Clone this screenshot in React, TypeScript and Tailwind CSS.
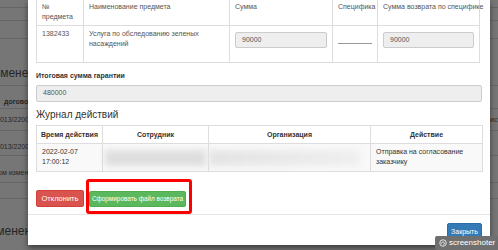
import React from 'react'

const cell = 'border border-[#dddddd] align-top px-[5px]'

const App: React.FC = () => {
  return (
    <div className="relative h-[250px] w-[498px] overflow-hidden bg-[#767676] font-['Liberation_Sans',Arial,sans-serif] text-[#262626]">
      {/* page behind the overlay */}
      <div className="flex flex-col">
        <div className="h-[8px] border-b border-[#666]" />
        <div className="h-[13px] border-b border-[#666]" />
        <div className="h-[18px] border-b border-[#666]" />
        <div className="flex h-[47px] items-end whitespace-nowrap border-b border-[#666] pb-[5px] text-[12px] leading-[14px]">
          <span className="-ml-[14px] w-[42px] overflow-hidden">Изменения</span>
        </div>
        <div className="flex h-[23px] items-end justify-between whitespace-nowrap border-b border-[#666] pb-[1px] text-[7px] leading-[10px]">
          <span className="ml-[4px] font-bold">договора</span>
        </div>
        <div className="flex h-[22px] items-center justify-between whitespace-nowrap border-b border-[#666] text-[7px] leading-[10px]">
          <span className="-ml-[4px]">0013/220023</span>
          <span className="w-[8px] overflow-hidden">ист</span>
        </div>
        <div className="flex h-[25px] items-end whitespace-nowrap border-b border-[#666] pb-[3px] text-[7px] leading-[10px]">
          <span className="-ml-[4px]">0013/220023</span>
        </div>
        <div className="flex h-[27px] items-end whitespace-nowrap border-b border-[#666] pb-[4px] text-[7px] leading-[10px]">
          <span className="-ml-[2px]">ом изменения</span>
        </div>
        <div className="h-[16px] border-b border-[#666]" />
        <div className="flex h-[40px] items-end whitespace-nowrap pb-[1px] text-[12px] leading-[14px]">
          <span className="-ml-[16px]">изменений</span>
        </div>
      </div>

      {/* modal */}
      <div className="absolute left-[28px] top-0 flex h-[245px] w-[462px] flex-col bg-white text-[#333] shadow-[0_3px_6px_rgba(0,0,0,0.5)]">
        <div className="relative flex h-[214px] flex-col px-[8px]">
          <table className="-mt-px w-[443px] table-fixed border-collapse text-[7px] leading-[10px]">
            <colgroup>
              <col className="w-[47px]" />
              <col className="w-[146px]" />
              <col className="w-[103px]" />
              <col className="w-[45px]" />
              <col className="w-[102px]" />
            </colgroup>
            <tbody>
              <tr className="h-[26px] text-[#555]">
                <td className={`${cell} pt-[2px]`}>№<br />предмета</td>
                <td className={`${cell} pt-[2px]`}>Наименование предмета</td>
                <td className={`${cell} pt-[2px]`}>Сумма</td>
                <td className={`${cell} whitespace-nowrap pt-[2px]`}>Специфика</td>
                <td className={`${cell} whitespace-nowrap pt-[2px]`}>Сумма возврата по спецификe</td>
              </tr>
              <tr className="h-[37px] text-[#555]">
                <td className={`${cell} pt-[3px]`}>1382433</td>
                <td className={`${cell} pt-[3px]`}>Услуга по обследованию зеленых<br />насаждений</td>
                <td className={`${cell} px-[4px] pt-[3px]`}>
                  <div className="mt-[3px] flex h-[16px] items-center rounded-[2px] border border-[#cccccc] bg-[#eeeeee] pl-[6px]">90000</div>
                </td>
                <td className={`${cell} px-[4px] pt-[3px]`}>
                  <div className="h-[15px] border-b border-[#999]" />
                </td>
                <td className={`${cell} px-[4px] pt-[3px]`}>
                  <div className="mt-[3px] flex h-[16px] items-center rounded-[2px] border border-[#cccccc] bg-[#eeeeee] pl-[6px]">90000</div>
                </td>
              </tr>
            </tbody>
          </table>

          <div className="mt-[8px] text-[7px] font-bold leading-[10px] text-[#333]">Итоговая сумма гарантии</div>
          <div className="mt-[4px] flex h-[17px] items-center rounded-[2px] border border-[#cccccc] bg-[#eeeeee] pl-[6px] text-[7px] text-[#555]">480000</div>

          <div className="mt-[7px] text-[10px] leading-[12px] text-[#333]">Журнал действий</div>

          <table className="mt-[4px] w-full table-fixed border-collapse text-[7px] leading-[10px]">
            <colgroup>
              <col className="w-[66px]" />
              <col className="w-[106px]" />
              <col className="w-[162px]" />
              <col className="w-[112px]" />
            </colgroup>
            <tbody>
              <tr className="h-[18px] font-bold">
                <td className="border border-[#dddddd] text-center align-middle">Время действия</td>
                <td className="border border-[#dddddd] text-center align-middle">Сотрудник</td>
                <td className="border border-[#dddddd] text-center align-middle">Организация</td>
                <td className="border border-[#dddddd] text-center align-middle">Действие</td>
              </tr>
              <tr className="h-[28px] bg-[#f9f9f9]">
                <td className={`${cell} pt-[3px]`}>2022-02-07<br />17:00:12</td>
                <td className="border border-[#dddddd] px-[2px] align-middle">
                  <div className="h-[16px] bg-[#dedede] blur-[3px]" />
                </td>
                <td className="border border-[#dddddd] pr-[10px] align-middle">
                  <div className="h-[16px] bg-gradient-to-r from-[#e4e4e4] to-[#efefef] blur-[3px]" />
                </td>
                <td className={`${cell} pt-[3px]`}>Отправка на согласование<br />заказчику</td>
              </tr>
            </tbody>
          </table>

          <div className="mt-[18px] flex items-center gap-[5px]">
            <div className="flex h-[17px] w-[48px] items-center justify-center rounded-[2px] border border-[#d43f3a] bg-[#d9534f] text-[7.5px] text-white">Отклонить</div>
            <div className="flex h-[16px] w-[97px] items-center justify-center whitespace-nowrap rounded-[2px] border border-[#4cae4c] bg-[#5cb85c] text-[6.4px] text-white">Сформировать файл возврата</div>
          </div>

          {/* annotation box */}
          <div className="absolute left-[58px] top-[179px] h-[35px] w-[106px] rounded-[3px] border-[3px] border-[#ff0000]" />
        </div>

        <div className="flex justify-end border-t border-[#e5e5e5] pr-[8px] pt-[8px]">
          <div className="flex h-[18px] w-[35px] items-center justify-center rounded-[2px] border border-[#2e6da4] bg-[#337ab7] text-[7px] text-white">Закрыть</div>
        </div>
      </div>

      {/* screenshoter badge */}
      <div className="absolute left-[435px] top-[236px] flex h-[14px] w-[66px] items-center gap-[2px] rounded-[2px] bg-[#6f6f6f] pl-[4px] text-[8px] text-white">
        <svg width="8" height="8" viewBox="0 0 16 16" fill="none" stroke="white" strokeWidth="1.6">
          <circle cx="8" cy="8" r="6.5" />
          <path d="M5 9.5c0-2 1.3-3.5 3-3.5s3 1.2 3 2.7c0 1.3-1 2.1-2.2 2.1" />
        </svg>
        <span>screenshoter</span>
      </div>
    </div>
  )
}

export default App
